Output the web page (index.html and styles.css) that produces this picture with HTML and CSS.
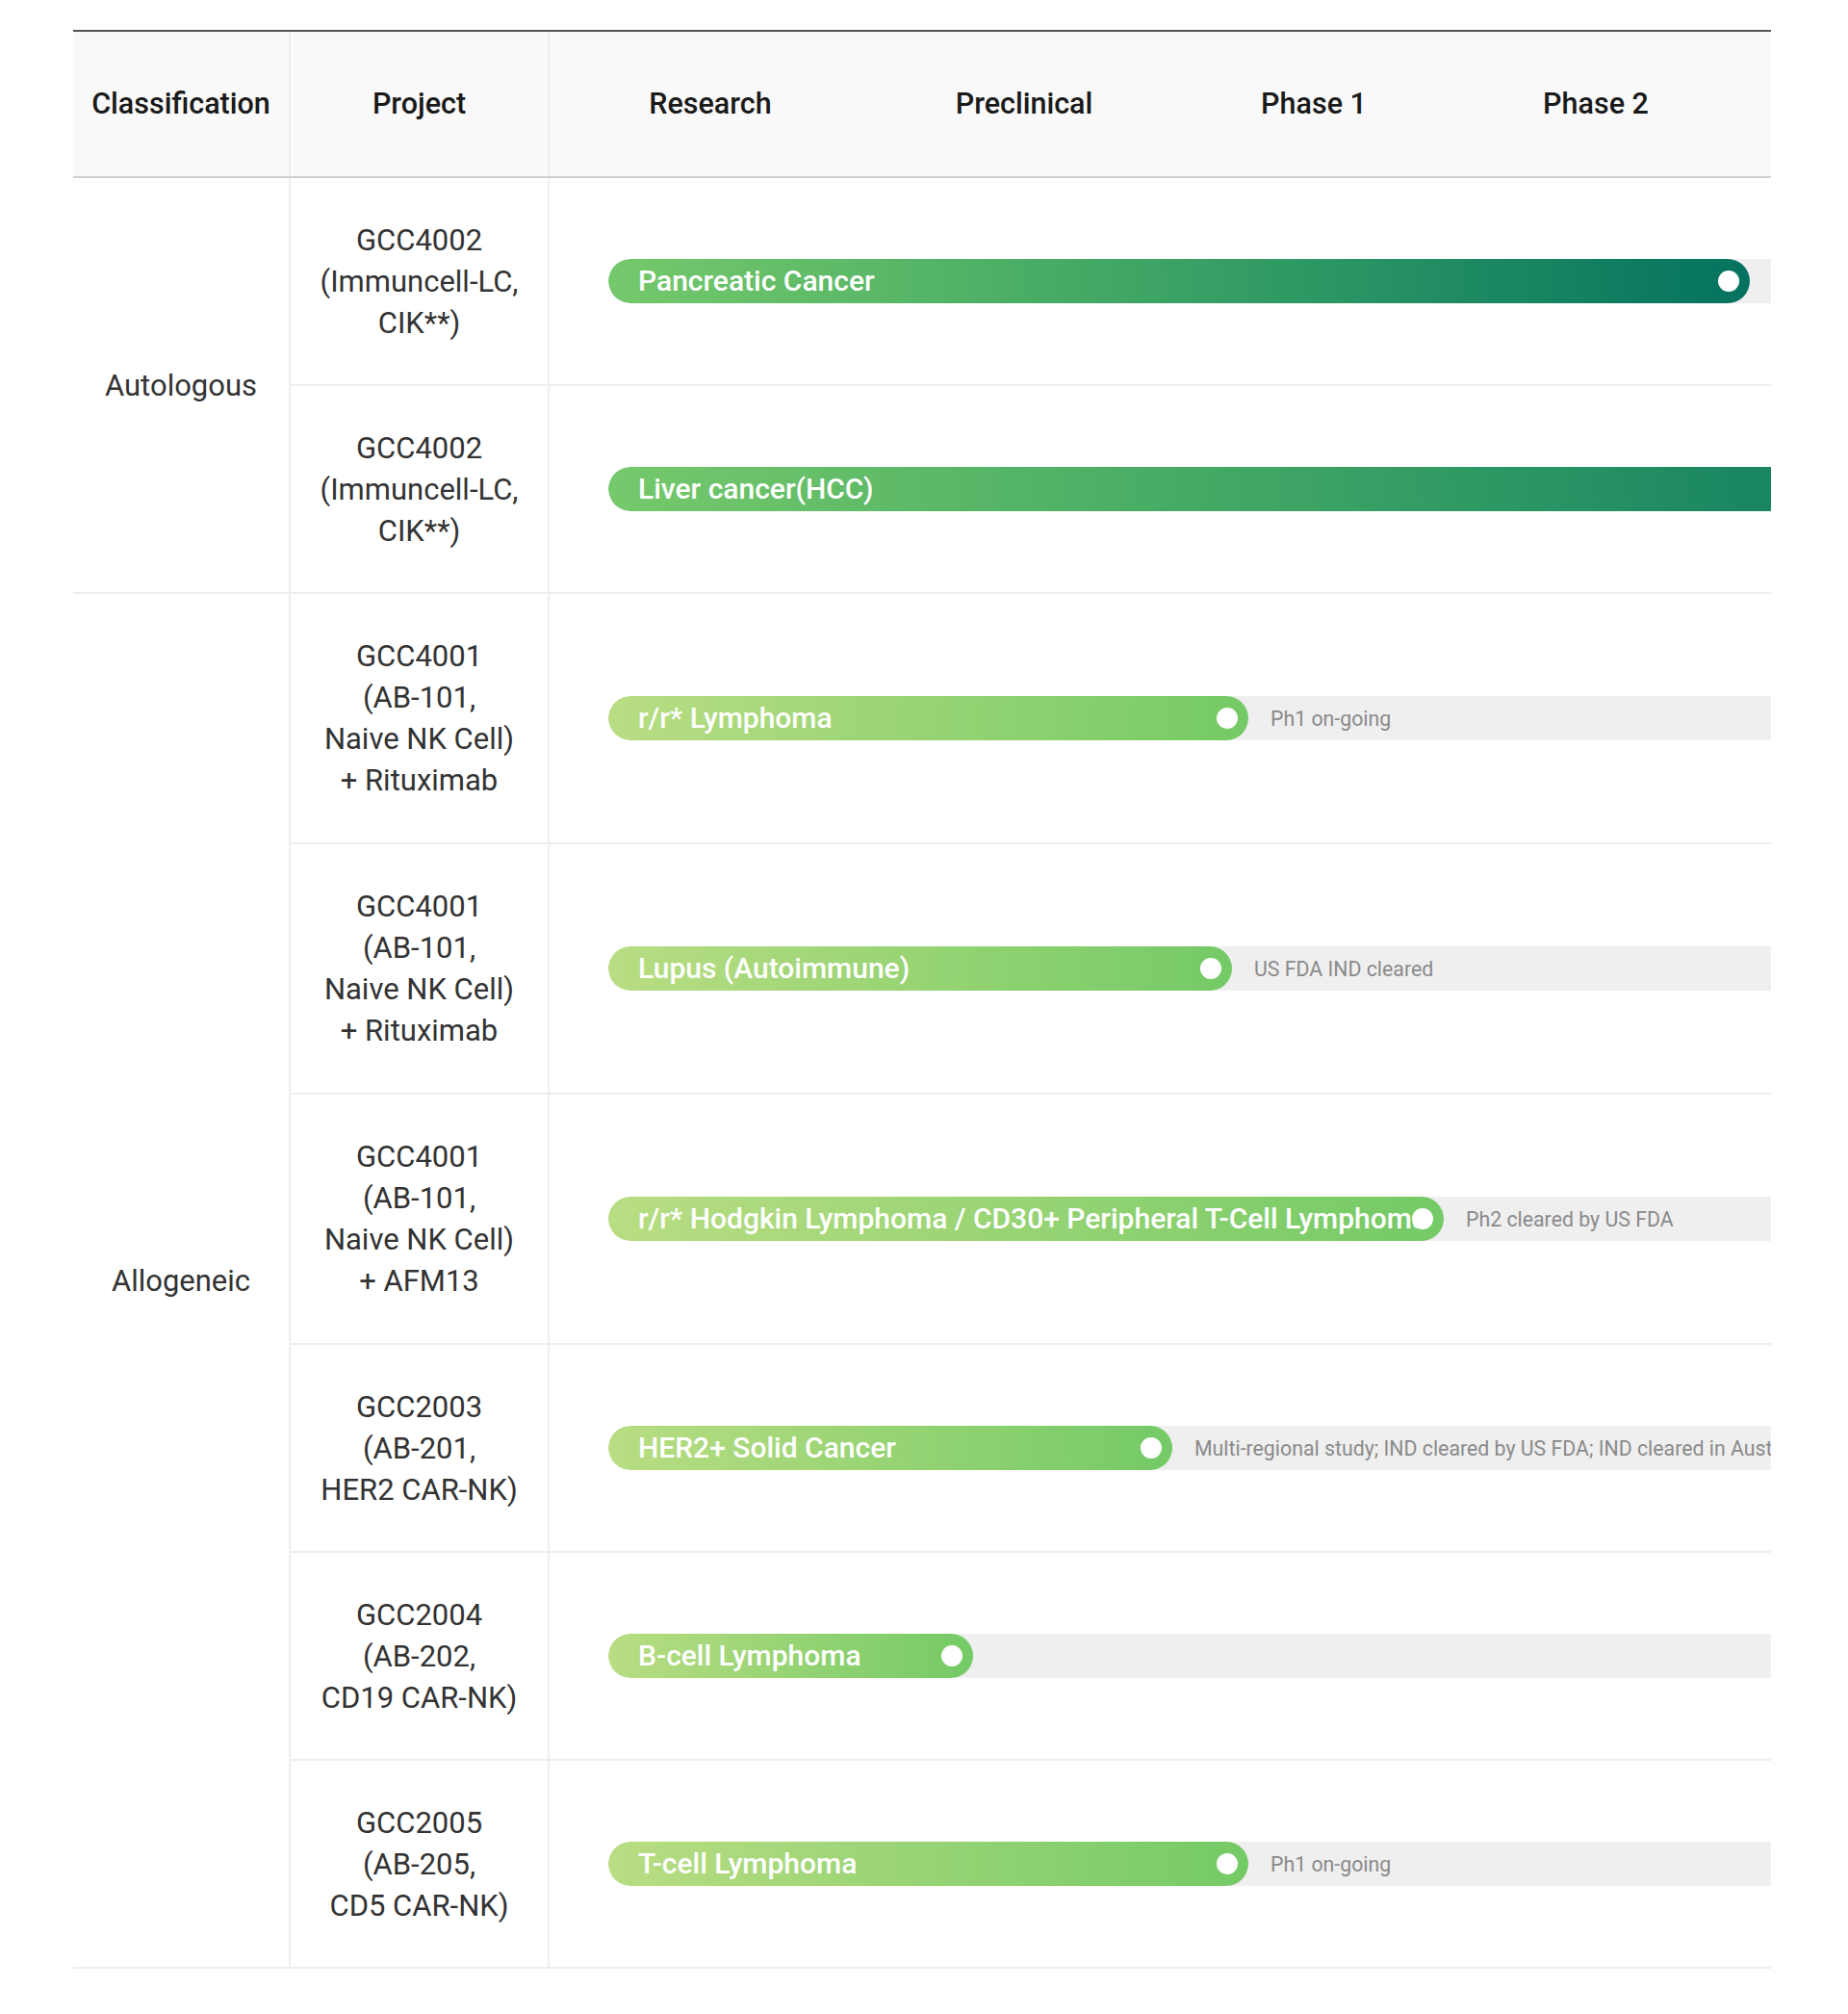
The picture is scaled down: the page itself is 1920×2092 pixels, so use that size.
FILE: index.html
```html
<!DOCTYPE html>
<html lang="en">
<head>
<meta charset="utf-8">
<title>Pipeline</title>
<link rel="stylesheet" href="styles.css">
</head>
<body>
<div class="pipeline">
  <div class="table">
    <div class="head">
      <div class="hcell">Classification</div>
      <div class="hcell hproj">Project</div>
      <div class="hphases">
        <span>Research</span>
        <span>Preclinical</span>
        <span>Phase 1</span>
        <span>Phase 2</span>
      </div>
    </div>
    <div class="rows">
      <div class="cls span2">Autologous</div>
      <div class="proj">GCC4002<br>(Immuncell-LC,<br>CIK**)</div>
      <div class="prog"><div class="track"><div class="bar bar-dark" style="width:1186px">Pancreatic Cancer</div></div></div>

      <div class="proj">GCC4002<br>(Immuncell-LC,<br>CIK**)</div>
      <div class="prog"><div class="track"><div class="bar bar-dark" style="width:1500px">Liver cancer(HCC)</div></div></div>

      <div class="cls span6">Allogeneic</div>
      <div class="proj tall">GCC4001<br>(AB-101,<br>Naive NK Cell)<br>+ Rituximab</div>
      <div class="prog"><div class="track"><div class="bar bar-light" style="width:665px">r/r* Lymphoma</div><span class="note">Ph1 on-going</span></div></div>

      <div class="proj tall">GCC4001<br>(AB-101,<br>Naive NK Cell)<br>+ Rituximab</div>
      <div class="prog"><div class="track"><div class="bar bar-light" style="width:648px">Lupus (Autoimmune)</div><span class="note">US FDA IND cleared</span></div></div>

      <div class="proj tall">GCC4001<br>(AB-101,<br>Naive NK Cell)<br>+ AFM13</div>
      <div class="prog"><div class="track"><div class="bar bar-light" style="width:868px">r/r* Hodgkin Lymphoma / CD30+ Peripheral T-Cell Lymphoma</div><span class="note">Ph2 cleared by US FDA</span></div></div>

      <div class="proj">GCC2003<br>(AB-201,<br>HER2 CAR-NK)</div>
      <div class="prog"><div class="track"><div class="bar bar-light" style="width:586px">HER2+ Solid Cancer</div><span class="note">Multi-regional study; IND cleared by US FDA; IND cleared in Australia</span></div></div>

      <div class="proj">GCC2004<br>(AB-202,<br>CD19 CAR-NK)</div>
      <div class="prog"><div class="track"><div class="bar bar-light" style="width:379px">B-cell Lymphoma</div></div></div>

      <div class="proj">GCC2005<br>(AB-205,<br>CD5 CAR-NK)</div>
      <div class="prog"><div class="track"><div class="bar bar-light" style="width:665px">T-cell Lymphoma</div><span class="note">Ph1 on-going</span></div></div>
    </div>
  </div>
</div>
</body>
</html>
```

FILE: styles.css
```css
* { box-sizing: border-box; }

html, body {
  margin: 0;
  padding: 0;
  background: #fff;
}

body {
  font-family: "Roboto", "Liberation Sans", sans-serif;
  color: #333;
}

.pipeline {
  padding: 31px 80px 48px 76px;
}

.table {
  width: 1764px;
  overflow: hidden;
  border-top: 2px solid #555;
}

.head {
  display: grid;
  grid-template-columns: 224px 271px 1fr;
  height: 152px;
  background: #f9f9f9;
  border-bottom: 2px solid #d0d0d0;
}

.hcell {
  display: flex;
  align-items: center;
  justify-content: center;
  padding-bottom: 2px;
  font-size: 30.5px;
  font-weight: 500;
  color: #1a1a1a;
}

.hproj {
  border-left: 2px solid #eeeeee;
  border-right: 2px solid #eeeeee;
}

.hphases {
  display: grid;
  grid-template-columns: 334px 318px 284px 302px 1fr;
  align-items: center;
  padding-bottom: 2px;
  font-size: 30.5px;
  font-weight: 500;
  color: #1a1a1a;
}

.hphases span {
  text-align: center;
  white-space: nowrap;
}

.rows {
  display: grid;
  grid-template-columns: 224px 271px 1fr;
}

.cls {
  grid-column: 1;
  display: flex;
  align-items: center;
  justify-content: center;
  font-size: 31px;
  border-bottom: 2px solid #eeeeee;
}

.span2 { grid-row: span 2; }
.span6 { grid-row: span 6; }

.proj {
  grid-column: 2;
  padding: 43px 4px 42px;
  font-size: 31px;
  line-height: 43px;
  text-align: center;
  border-left: 2px solid #eeeeee;
  border-right: 2px solid #eeeeee;
  border-bottom: 2px solid #eeeeee;
  white-space: nowrap;
}

.proj.tall {
  padding-bottom: 43px;
}

.prog {
  grid-column: 3;
  display: flex;
  align-items: center;
  padding-left: 61px;
  border-bottom: 2px solid #eeeeee;
}

.track {
  flex: 1;
  height: 46px;
  display: flex;
  align-items: center;
  background: #efefef;
  border-radius: 23px 0 0 23px;
  overflow: hidden;
}

.bar {
  position: relative;
  flex: none;
  height: 46px;
  padding-left: 31px;
  border-radius: 23px;
  color: #fff;
  font-size: 30px;
  font-weight: 500;
  line-height: 46px;
  white-space: nowrap;
}

.bar::after {
  content: "";
  position: absolute;
  right: 11px;
  top: 12px;
  width: 22px;
  height: 22px;
  border-radius: 50%;
  background: #fff;
}

.bar-dark {
  background: linear-gradient(to right, #76c96b 0%, #52b366 30%, #2f9964 60%, #04725f 100%);
}

.bar-light {
  background: linear-gradient(to right, #b9dd82 0%, #74ca66 100%);
}

.note {
  margin-left: 23px;
  font-size: 21.3px;
  color: #8a8a8a;
  white-space: nowrap;
}
```
